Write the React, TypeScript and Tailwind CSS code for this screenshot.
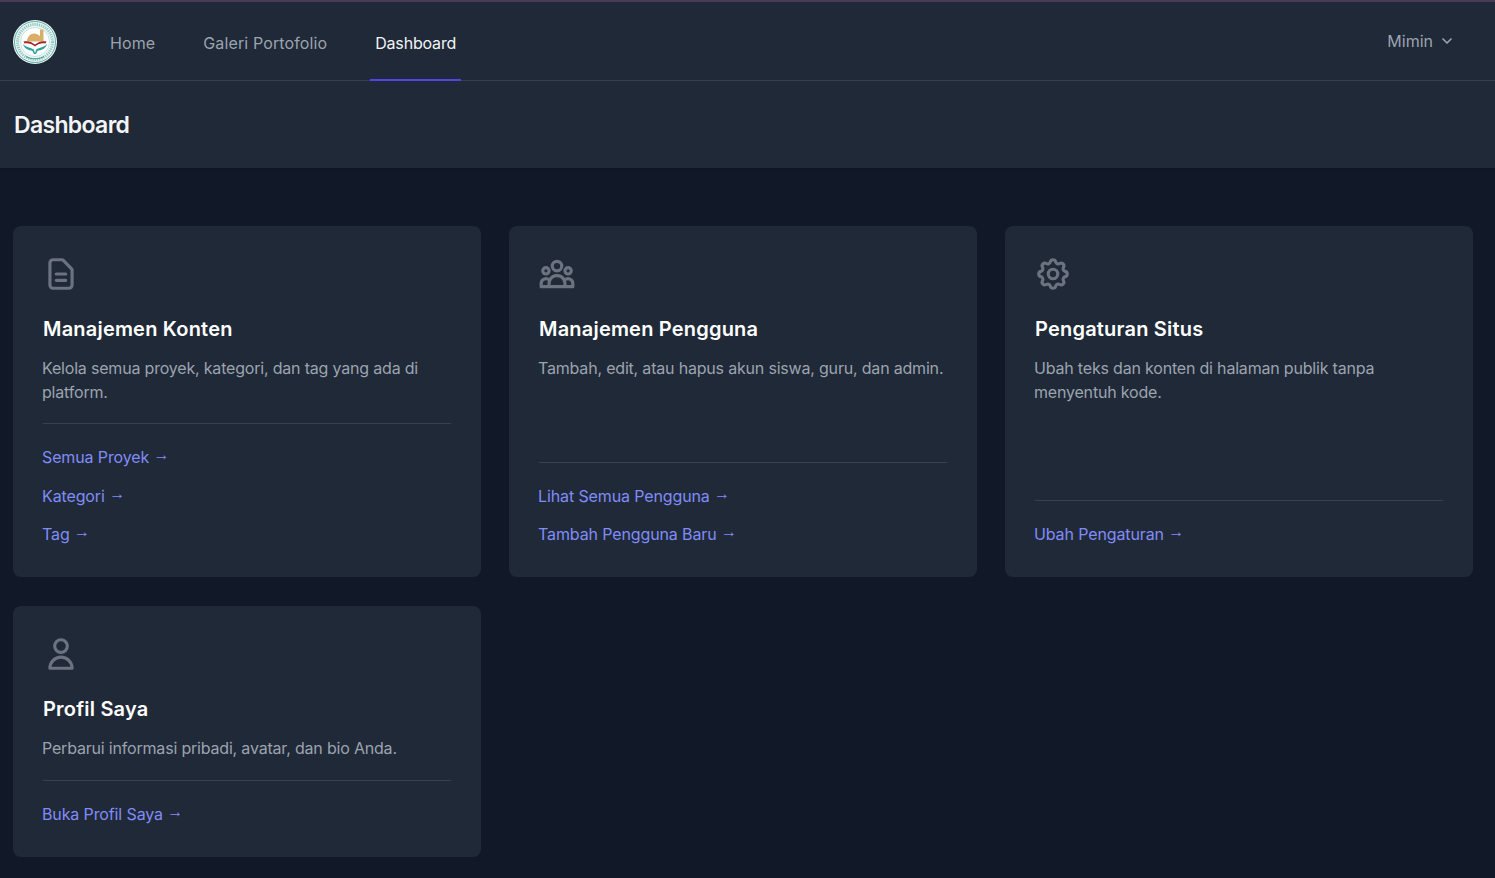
import type { ReactNode } from "react";
import { ChevronDown } from "lucide-react";

type CardData = {
	title: string;
	text: string;
	links: string[];
	icon: ReactNode;
};

const docIcon = (
	<path d="M9 12h6m-6 4h6m2 5H7a2 2 0 01-2-2V5a2 2 0 012-2h5.586a1 1 0 01.707.293l5.414 5.414a1 1 0 01.293.707V19a2 2 0 01-2 2z" />
);
const groupIcon = (
	<path d="M17 20h5v-2a3 3 0 00-5.356-1.857M17 20H7m10 0v-2c0-.656-.126-1.283-.356-1.857M7 20H2v-2a3 3 0 015.356-1.857M7 20v-2c0-.656.126-1.283.356-1.857m0 0a5.002 5.002 0 019.288 0M15 7a3 3 0 11-6 0 3 3 0 016 0zm6 3a2 2 0 11-4 0 2 2 0 014 0zM7 10a2 2 0 11-4 0 2 2 0 014 0z" />
);
const cogIcon = (
	<>
		<path d="M10.325 4.317c.426-1.756 2.924-1.756 3.35 0a1.724 1.724 0 002.573 1.066c1.543-.94 3.31.826 2.37 2.37a1.724 1.724 0 001.065 2.572c1.756.426 1.756 2.924 0 3.35a1.724 1.724 0 00-1.066 2.573c.94 1.543-.826 3.31-2.37 2.37a1.724 1.724 0 00-2.572 1.065c-.426 1.756-2.924 1.756-3.35 0a1.724 1.724 0 00-2.573-1.066c-1.543.94-3.31-.826-2.37-2.37a1.724 1.724 0 00-1.065-2.572c-1.756-.426-1.756-2.924 0-3.35a1.724 1.724 0 001.066-2.573c-.94-1.543.826-3.31 2.37-2.37.996.608 2.296.07 2.572-1.065z" />
		<path d="M15 12a3 3 0 11-6 0 3 3 0 016 0z" />
	</>
);
const userIcon = (
	<path d="M16 7a4 4 0 11-8 0 4 4 0 018 0zM12 14a7 7 0 00-7 7h14a7 7 0 00-7-7z" />
);

const cards: CardData[] = [
	{
		title: "Manajemen Konten",
		text: "Kelola semua proyek, kategori, dan tag yang ada di platform.",
		links: ["Semua Proyek", "Kategori", "Tag"],
		icon: docIcon,
	},
	{
		title: "Manajemen Pengguna",
		text: "Tambah, edit, atau hapus akun siswa, guru, dan admin.",
		links: ["Lihat Semua Pengguna", "Tambah Pengguna Baru"],
		icon: groupIcon,
	},
	{
		title: "Pengaturan Situs",
		text: "Ubah teks dan konten di halaman publik tanpa menyentuh kode.",
		links: ["Ubah Pengaturan"],
		icon: cogIcon,
	},
	{
		title: "Profil Saya",
		text: "Perbarui informasi pribadi, avatar, dan bio Anda.",
		links: ["Buka Profil Saya"],
		icon: userIcon,
	},
];

const Logo = () => (
	<svg viewBox="0 0 44 44" className="h-11 w-11 shrink-0">
		<circle cx="22" cy="22" r="22" fill="#eef7f5" />
		<circle cx="22" cy="22" r="20.5" fill="none" stroke="#3f9c94" strokeWidth="0.8" />
		<circle cx="22" cy="22" r="17.5" fill="none" stroke="#4aa79f" strokeWidth="3" strokeDasharray="1.2 1" opacity="0.6" />
		<circle cx="22" cy="22" r="14.5" fill="#ffffff" stroke="#8fcfc8" strokeWidth="0.5" />
		{/* dome and tower */}
		<path d="M27 9.500h3.500V21.500H27z" fill="#d9ae68" />
		<path d="M14 21.500c0-4.500 3.500-8 7-8 2 0 4 1 6 2.500v5.500z" fill="#d9ae68" />
		{/* book */}
		<path d="M10.500 21.500c4-1 8 0 11.500 3 3.500-3 7.500-4 11.500-3l-1 2c-3.500-.8-7 .2-10.500 3-3.500-2.800-7-3.800-10.500-3z" fill="#a3262a" />
		<path d="M10 24c3 3.500 7.500 3.500 10.800 5.500L22 33l1.200-3.500C26.500 27.500 31 27.500 34 24c-1 5-6 6-9.500 7l-1.500 3h-2l-1.500-3c-3.500-1-8.500-2-9.500-7z" fill="#2fa39a" />
		<path d="M13 36.500c5 3 13 3 18 0" fill="none" stroke="#3f9c94" strokeWidth="1" />
	</svg>
);

const Card = ({ title, text, links, icon }: CardData) => (
	<div className="flex min-h-[251px] flex-col rounded-lg bg-[#1f2937] px-[30px] pt-[30px] pb-[31px]">
		<svg
			viewBox="0 0 24 24"
			fill="none"
			stroke="currentColor"
			strokeWidth={2}
			strokeLinecap="round"
			strokeLinejoin="round"
			className="-m-px h-[38px] w-[38px] shrink-0 text-[#6b7280]"
		>
			{icon}
		</svg>
		<h3 className="mt-[23px] text-xl leading-7 font-semibold tracking-[0.2px] text-white">{title}</h3>
		<p className="mt-[13px] mb-[19px] -ml-px text-base leading-6 tracking-[-0.19px] text-[#9ca3af]">{text}</p>
		{/* links stay at the bottom of the card */}
		<div className="mt-auto flex flex-col gap-[14.5px] border-t border-[#374151] pt-[21px]">
			{links.map((link) => (
				<a key={link} href="#" className="-ml-px text-base leading-6 tracking-[-0.12px] text-[#818cf8]">
					{link}{" "}
					<span className="inline-block -translate-y-[3px] font-['Liberation_Sans',sans-serif] leading-none">→</span>
				</a>
			))}
		</div>
	</div>
);

const App = () => {
	return (
		<div className="min-h-[878px] bg-[#111827] font-['Inter',sans-serif]">
			<div className="h-0.5 bg-[#4a3b57]" />
			<nav className="flex h-[79px] items-stretch border-b border-[#374151] bg-[#1f2937] pr-10 pl-[13px]">
				<div className="flex items-center pt-0.5">
					<Logo />
				</div>
				<div className="ml-12 -mb-px flex gap-[38px]">
					<a href="#" className="flex items-center border-b-2 border-transparent px-[5px] pt-1 text-base tracking-[0.12px] text-[#9ca3af]">
						Home
					</a>
					<a href="#" className="flex items-center border-b-2 border-transparent px-[5px] pt-1 text-base tracking-[0.12px] text-[#9ca3af]">
						Galeri Portofolio
					</a>
					<a href="#" className="flex items-center border-b-2 border-[#4f46e5] px-[5px] pt-1 text-base tracking-[-0.18px] text-[#f3f4f6]">
						Dashboard
					</a>
				</div>
				<button className="ml-auto flex items-center gap-1.5 text-base text-[#9ca3af]">
					Mimin
					<ChevronDown className="h-4 w-4" strokeWidth={2.5} />
				</button>
			</nav>

			<header className="flex h-[87px] items-center bg-[#1f2937] px-3.5 shadow">
				<h2 className="text-[23px] leading-8 font-semibold tracking-[-0.67px] text-[#f3f4f6]">Dashboard</h2>
			</header>

			<main className="grid grid-cols-3 gap-x-7 gap-y-[29px] pt-[58px] pr-[22px] pl-[13px]">
				{cards.map((card) => (
					<Card key={card.title} {...card} />
				))}
			</main>
		</div>
	);
};

export default App;
